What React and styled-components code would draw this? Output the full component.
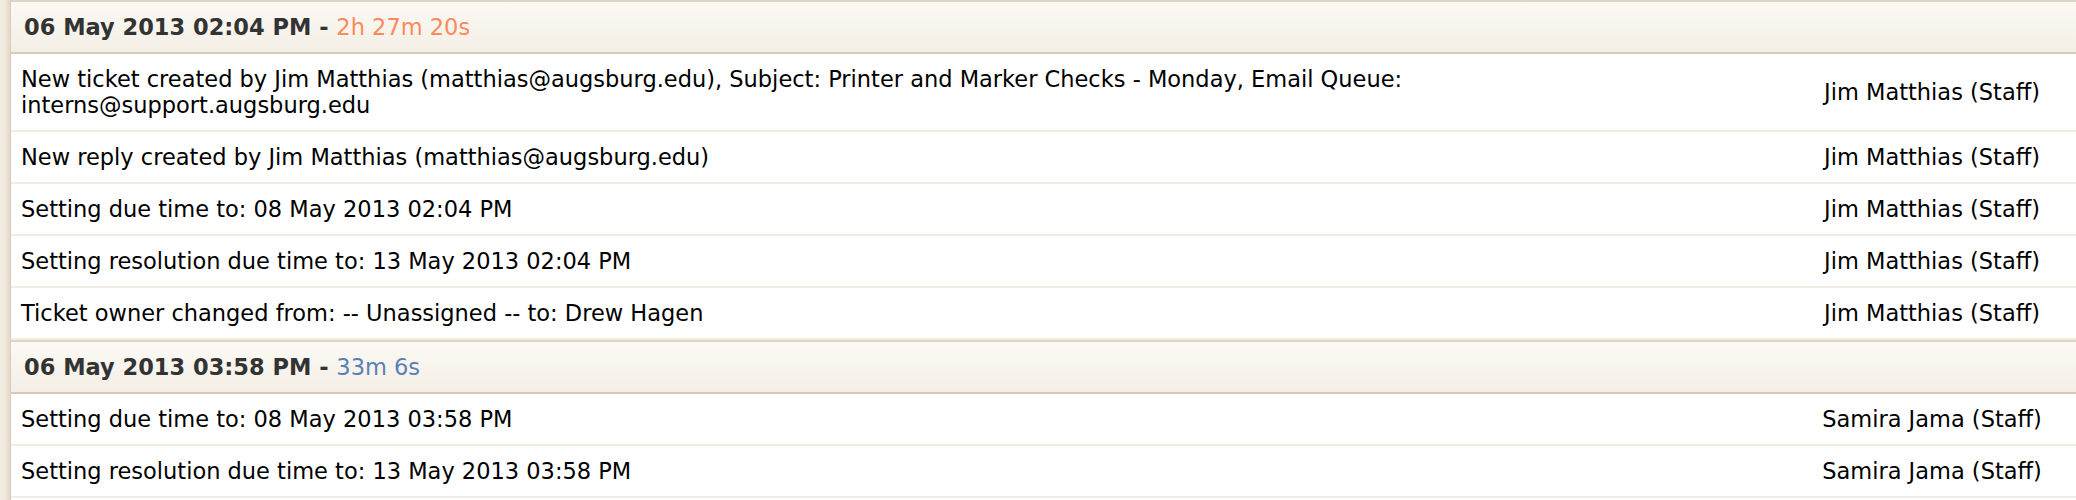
import styled, { createGlobalStyle } from 'styled-components';

const GlobalStyle = createGlobalStyle`
  html, body {
    margin: 0;
    padding: 0;
    background: #ffffff;
  }

  body {
    font-family: 'DejaVu Sans', Verdana, sans-serif;
    font-size: 22.5px;
    color: #000;
  }
`;

const Page = styled.div`
  display: flex;
  width: 2076px;
  min-height: 500px;
`;

/* beige edge of the side panel */
const Edge = styled.div`
  flex: 0 0 10px;
  background: linear-gradient(to right, #f3ede3 0, #efe7db 6px, #e4dacb 9px);
  border-right: 1px solid #d8cdbc;
`;

const Audit = styled.div`
  flex: 1;
  display: flex;
  flex-direction: column;
`;

const GroupHeader = styled.div`
  display: flex;
  align-items: center;
  height: 50px;
  padding: 0 13px;
  border-top: 2px solid #ddd4c6;
  border-bottom: 2px solid #d5cab9;
  background: linear-gradient(to bottom, #fbf9f5, #f4efe5);
  font-weight: bold;
  color: #333;
  white-space: pre;
`;

const Elapsed = styled.span`
  font-weight: normal;
  color: ${(p) => (p.$long ? '#fb8a5c' : '#5b7fb6')};
`;

const Row = styled.div`
  display: grid;
  grid-template-columns: 1fr 288px;
  align-items: center;
  border-bottom: 2px solid #f2ece3;
  line-height: 26px;
`;

const Message = styled.div`
  padding: 12px 60px 12px 10px;
`;

const Who = styled.div`
  padding: 12px 0;
  text-align: center;
`;

const groups = [
  {
    time: '06 May 2013 02:04 PM',
    elapsed: '2h 27m 20s',
    long: true,
    rows: [
      {
        msg: 'New ticket created by Jim Matthias (matthias@augsburg.edu), Subject: Printer and Marker Checks - Monday, Email Queue: interns@support.augsburg.edu',
        who: 'Jim Matthias (Staff)',
      },
      { msg: 'New reply created by Jim Matthias (matthias@augsburg.edu)', who: 'Jim Matthias (Staff)' },
      { msg: 'Setting due time to: 08 May 2013 02:04 PM', who: 'Jim Matthias (Staff)' },
      { msg: 'Setting resolution due time to: 13 May 2013 02:04 PM', who: 'Jim Matthias (Staff)' },
      { msg: 'Ticket owner changed from: -- Unassigned -- to: Drew Hagen', who: 'Jim Matthias (Staff)' },
    ],
  },
  {
    time: '06 May 2013 03:58 PM',
    elapsed: '33m 6s',
    long: false,
    rows: [
      { msg: 'Setting due time to: 08 May 2013 03:58 PM', who: 'Samira Jama (Staff)' },
      { msg: 'Setting resolution due time to: 13 May 2013 03:58 PM', who: 'Samira Jama (Staff)' },
    ],
  },
];

const App = () => {
  return (
    <>
      <GlobalStyle />
      <Page>
        <Edge />
        <Audit>
          {groups.map((g) => (
            <div key={g.time}>
              <GroupHeader>
                {g.time} - <Elapsed $long={g.long}>{g.elapsed}</Elapsed>
              </GroupHeader>
              {g.rows.map((r, i) => (
                <Row key={i}>
                  <Message>{r.msg}</Message>
                  <Who>{r.who}</Who>
                </Row>
              ))}
            </div>
          ))}
        </Audit>
      </Page>
    </>
  );
};

export default App;
